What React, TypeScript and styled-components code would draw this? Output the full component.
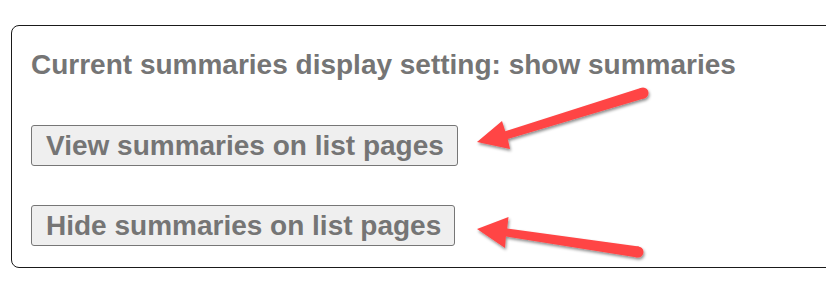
import React, { FC } from 'react';
import styled, { createGlobalStyle } from 'styled-components';

const GlobalStyle = createGlobalStyle`
  html, body {
    margin: 0;
    padding: 0;
    background: #ffffff;
    overflow: hidden;
  }
  body {
    font-family: 'Liberation Sans', Arial, sans-serif;
  }
`;

type Arrow = {
  tail: [number, number];
  body: string;
};

const arrows: Arrow[] = [
  {
    tail: [643, 93],
    body: 'M641.4 87.7 L505.3 131.2 L502 121 L477 142 L510 149 L507.8 138.9 L644.6 98.3 Z',
  },
  {
    tail: [638, 252],
    body: 'M638.8 246.6 L507.2 228.6 L508.5 217 L477 229 L505 248 L505.9 236.4 L637.2 257.4 Z',
  },
];

export const SettingsPanel: FC = () => {
  return (
    <Page>
      <Panel>
        <Heading>Current summaries display setting: show summaries</Heading>
        <Actions>
          <ActionButton type='button'>View summaries on list pages</ActionButton>
          <ActionButton type='button'>Hide summaries on list pages</ActionButton>
        </Actions>
      </Panel>
      <Annotations width='826' height='287' viewBox='0 0 826 287'>
        <defs>
          <filter id='arrow-shadow' x='-10%' y='-30%' width='130%' height='170%'>
            <feDropShadow dx='1' dy='2' stdDeviation='1.6' floodColor='#000' floodOpacity='0.45' />
          </filter>
        </defs>
        {arrows.map((a, i) => (
          <g key={i} fill='#ff4545' filter='url(#arrow-shadow)'>
            <path d={a.body} />
            <circle cx={a.tail[0]} cy={a.tail[1]} r='5.5' />
          </g>
        ))}
      </Annotations>
    </Page>
  );
};

export default function App() {
  return (
    <>
      <GlobalStyle />
      <SettingsPanel />
    </>
  );
}

const Page = styled.div`
  position: relative;
  width: 826px;
  height: 287px;
  overflow: hidden;
  padding-top: 25px;
  box-sizing: border-box;
`;

const Panel = styled.section`
  margin-left: 11px;
  width: 860px;
  box-sizing: border-box;
  border: 1px solid #1a1a1a;
  border-radius: 8px;
  padding: 23px 19px 21px 19px;
  display: flex;
  flex-direction: column;
`;

const Heading = styled.h2`
  margin: 0;
  color: #757575;
  font-size: 28px;
  font-weight: bold;
  line-height: 32px;
  white-space: nowrap;
`;

const Actions = styled.div`
  margin-top: 44px;
  display: flex;
  flex-direction: column;
  align-items: flex-start;
  gap: 39px;
`;

const ActionButton = styled.button`
  height: 41px;
  box-sizing: border-box;
  padding: 0 13px 0 14px;
  margin: 0;
  border: 1px solid #767676;
  border-radius: 3px;
  background: #efefef;
  color: #757575;
  font-family: 'Liberation Sans', Arial, sans-serif;
  font-size: 28px;
  font-weight: bold;
  line-height: 39px;
  white-space: nowrap;
  cursor: pointer;
`;

const Annotations = styled.svg`
  position: absolute;
  top: 0;
  left: 0;
  pointer-events: none;
`;
